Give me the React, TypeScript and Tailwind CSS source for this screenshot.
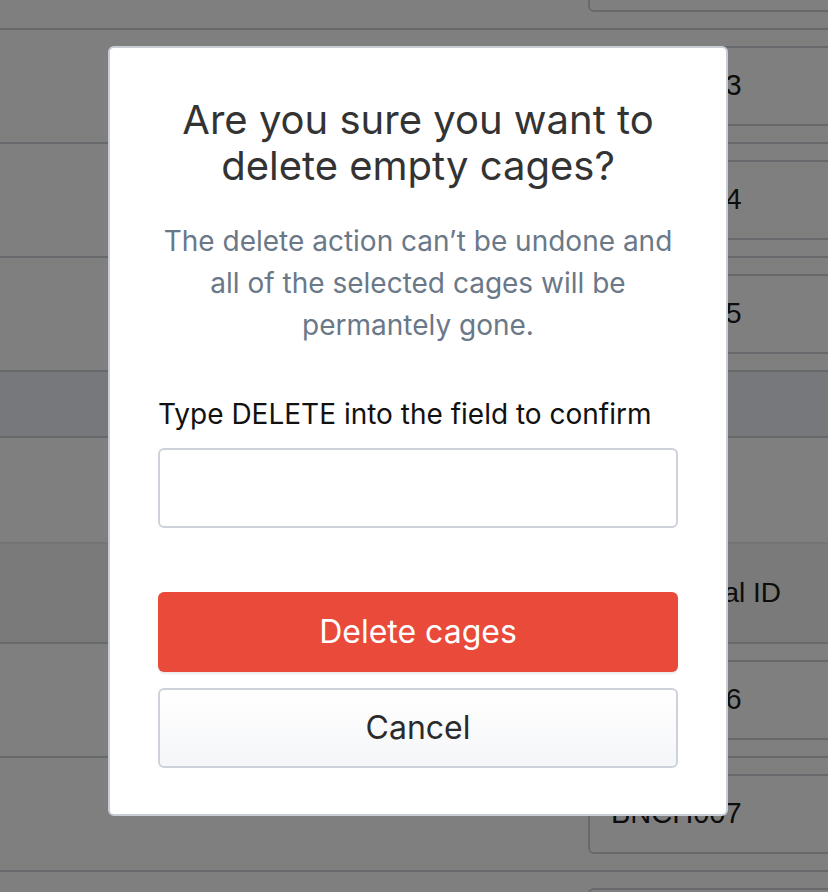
import { FC } from "react";

const CageRow: FC<{ id: string }> = ({ id }) => {
  return (
    <div className="flex h-[114px] items-center border-b-2 border-[#ced2da]">
      <div className="w-[588px] shrink-0" />
      <div className="flex h-[80px] w-[320px] shrink-0 items-center rounded-[6px] border-2 border-[#ced2da] px-[21px] text-[29px] text-[#1a1a1a]">
        {id}
      </div>
    </div>
  );
};

const App: FC = () => {
  return (
    <div className="relative h-[892px] w-[828px] overflow-hidden bg-white font-['Liberation_Sans',Arial,sans-serif]">
      {/* page behind the dialog */}
      <div className="-mt-[84px]">
        <CageRow id="BNCH002" />
        <CageRow id="BNCH003" />
        <CageRow id="BNCH004" />
        <CageRow id="BNCH005" />
        <div className="h-[66px] border-b-2 border-[#ced2da] bg-[#ecf0f7]" />
        <div className="h-[106px] border-b-2 border-[#e8e8e8]" />
        <div className="flex h-[100px] items-center border-b-2 border-[#ced2da] bg-[#f3f5f3]">
          <div className="w-[641px] shrink-0" />
          <span className="text-[28px] text-[#1a1a1a]">Physical ID</span>
        </div>
        <CageRow id="BNCH006" />
        <CageRow id="BNCH007" />
        <CageRow id="BNCH008" />
      </div>

      {/* overlay */}
      <div className="absolute inset-0 bg-black/50" />

      {/* dialog */}
      <div className="absolute left-[108px] top-[46px] w-[620px] rounded-[6px] border-2 border-[#c9ced6] bg-white px-[48px] pb-[46px] pt-[49px] font-['Inter',sans-serif]">
        <h2 className="text-center text-[40px] leading-[46px] text-[#333]">
          Are you sure you want to
          <br />
          delete empty cages?
        </h2>
        <p className="mt-[31px] text-center text-[28px] leading-[42px] text-[#6a7888]">
          The delete action can’t be undone and
          <br />
          all of the selected cages will be
          <br />
          permantely gone.
        </p>
        <label className="mt-[51px] block text-[28px] leading-[34px] text-[#111]">
          Type DELETE into the field to confirm
        </label>
        <input
          type="text"
          className="mt-[17px] block h-[80px] w-full rounded-[6px] border-2 border-[#cdd2da] bg-white px-4 text-[24px] outline-none"
        />
        <button className="mt-[64px] flex h-[80px] w-full items-center justify-center rounded-[6px] bg-[#e94a3a] text-[32px] text-white shadow-[0_2px_2px_rgba(0,0,0,0.08)]">
          Delete cages
        </button>
        <button className="mt-[16px] flex h-[80px] w-full items-center justify-center rounded-[6px] border-2 border-[#cdd2da] bg-gradient-to-b from-white to-[#f5f6f8] text-[32px] text-[#2b2b2b]">
          Cancel
        </button>
      </div>
    </div>
  );
};

export default App;
